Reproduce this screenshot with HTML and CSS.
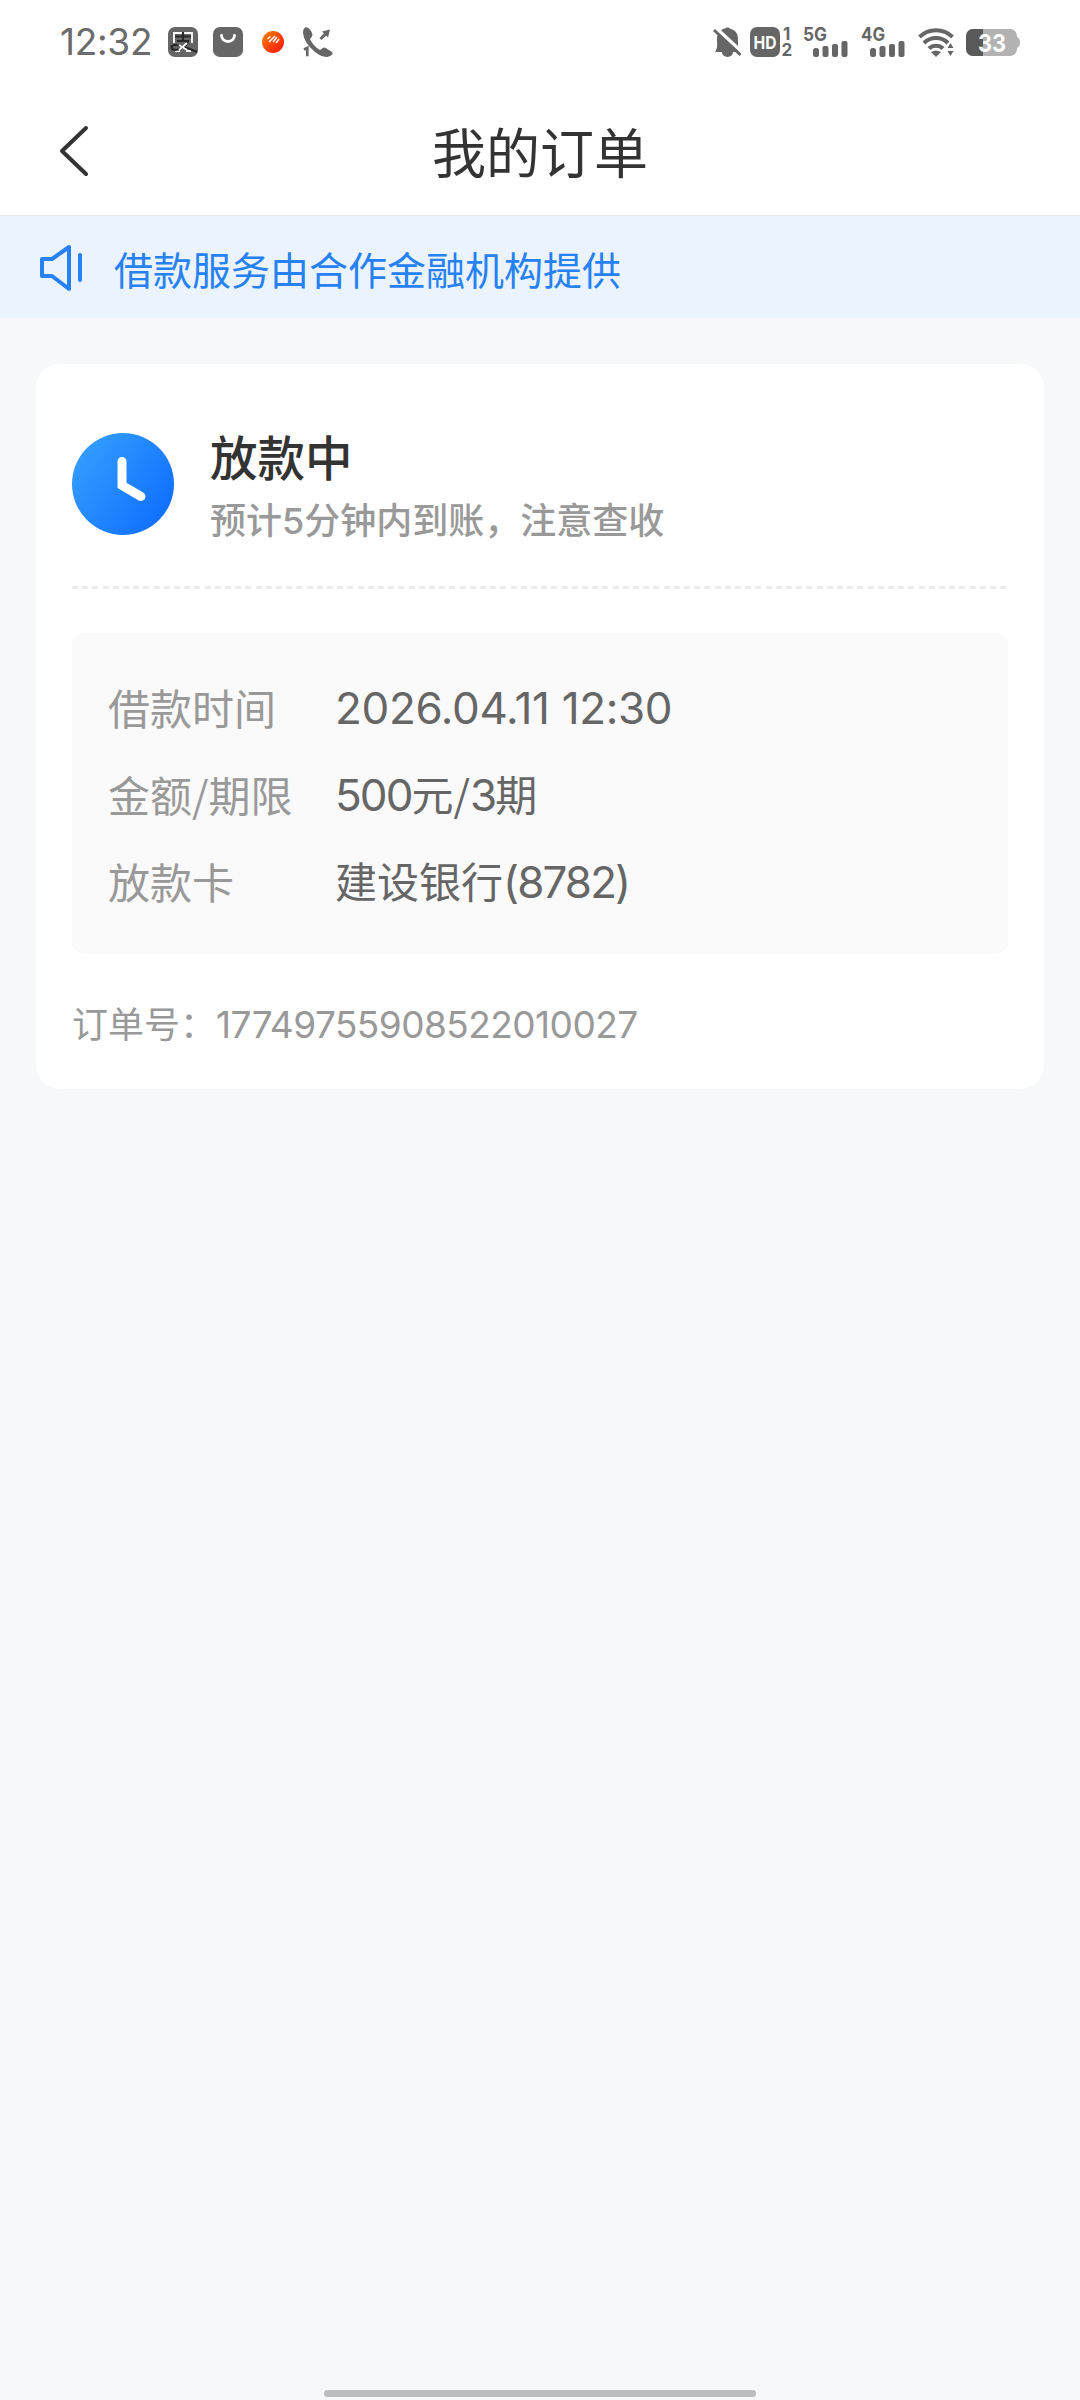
FILE: index.html
```html
<!DOCTYPE html>
<html lang="zh-CN">
<head>
<meta charset="utf-8">
<title>我的订单</title>
<link rel="stylesheet" href="styles.css">
</head>
<body>
<div class="screen">
  <div class="status-bar">
    <div class="status-left">
      <span class="clock-text">12:32</span>
      <svg width="30" height="30" viewBox="0 0 30 30"><rect width="30" height="30" rx="7" fill="#666"/><path d="M6 16V6h18v10M7 24h5M18 24h5" fill="none" stroke="#fff" stroke-width="1.800"/><path d="M7 9.500h16M15 5v9M9 14h12M20 15c-2 5-8 8-13 8-5-1-4-5 0-5 7 0 13 3 22 7" fill="none" stroke="#282828" stroke-width="2.200"/><path d="M11 18l8 5M19 16l-8 7" stroke="#fff" stroke-width="1.800"/></svg>
      <svg width="30" height="30" viewBox="0 0 30 30"><rect width="30" height="30" rx="7" fill="#666"/><path d="M8.500 8.500a6.500 6 0 0 0 13 0" fill="none" stroke="#fff" stroke-width="2.800" stroke-linecap="round"/></svg>
      <svg width="30" height="30" viewBox="0 0 30 30"><defs><linearGradient id="sun" x1="0" y1="0" x2="1" y2="1"><stop offset="0" stop-color="#ff8a00"/><stop offset=".6" stop-color="#fb3b07"/><stop offset="1" stop-color="#ef1609"/></linearGradient></defs><circle cx="15" cy="15" r="11" fill="url(#sun)"/><path d="M9.500 12l3-2.500M11 15l6-6M15 15l4-5M18 16l3-4" stroke="#fff" stroke-width="1.500"/></svg>
      <svg width="30" height="30" viewBox="0 0 30 30"><path d="M2 .500C5-1 9 4 9.500 8Q9 10 7 12 10 19 17 23 20 20 22 20.500L29 25Q31 27 27 29 21 32 12 25 1 16 0 6 0 2 2 .500z" fill="#666"/><path d="M17.500 12l6-6" stroke="#666" stroke-width="3"/><path d="M19 4.500l8-2-2 8z" fill="#666"/><path d="M1 22.500l3.300-1.700v8.500" fill="none" stroke="#666" stroke-width="2.600"/></svg>
    </div>
    <div class="status-right">
      <svg width="25" height="30" viewBox="0 0 25 30"><path d="M1 25c3-4 2-8 2-13C3 5 8 2 11 1.500 12 0 15 0 16 1.500 21 3 24 6 24 12s0 10 2 13z" fill="#666"/><path d="M8 25a5.500 5 0 0 0 11 0" fill="#666"/><path d="M1 0l27 25" stroke="#fff" stroke-width="3.500"/><path d="M0 3l26.500 25" stroke="#666" stroke-width="2.800"/></svg>
      <svg width="42" height="30" viewBox="0 0 42 30"><rect width="30" height="30" rx="7" fill="#666"/><text x="15" y="21.500" textLength="23" lengthAdjust="spacingAndGlyphs" text-anchor="middle" class="glyph-light" font-size="18">HD</text><text x="33" y="12.500" class="glyph" font-size="17">1</text><text x="31.500" y="29" class="glyph" font-size="17">2</text></svg>
      <svg width="47" height="30" viewBox="0 0 47 30"><text x="0" y="14" textLength="24" lengthAdjust="spacingAndGlyphs" class="glyph" font-size="19">5G</text><g fill="#666"><rect x="10" y="21" width="6" height="9" rx="2.500"/><rect x="19.500" y="19" width="6" height="11" rx="2"/><rect x="29" y="17" width="6" height="13" rx="2"/><rect x="38.500" y="14" width="6" height="16" rx="2"/></g></svg>
      <svg width="46" height="30" viewBox="0 0 46 30"><text x="0" y="14" textLength="24" lengthAdjust="spacingAndGlyphs" class="glyph" font-size="19">4G</text><g fill="#666"><rect x="9" y="21" width="6" height="9" rx="2.500"/><rect x="18.500" y="19" width="6" height="11" rx="2"/><rect x="28" y="17" width="6" height="13" rx="2"/><rect x="37.500" y="14" width="6" height="16" rx="2"/></g></svg>
      <svg width="37" height="30" viewBox="0 0 37 30"><g fill="none" stroke="#666" stroke-width="4"><path d="M1.500 10a23.500 23.500 0 0 1 33 0"/><path d="M6 16a17 17 0 0 1 24 0"/><path d="M11 21.500a10 10 0 0 1 14 0"/></g><path d="M13 25q5-3 10 0l-5 5z" fill="#666"/><path d="M29.500 21l3-5 3 5zM29.500 24l3 5 3-5z" fill="#666"/></svg>
      <svg width="54" height="27" viewBox="0 0 54 27"><defs><clipPath id="cell"><rect width="51" height="27" rx="7"/></clipPath></defs><g clip-path="url(#cell)"><rect width="51" height="27" fill="#b2b2b2"/><rect width="17" height="27" fill="#595959"/></g><path d="M51 8c4 1 4 10 0 11z" fill="#b2b2b2"/><text x="26" y="22.500" text-anchor="middle" textLength="28" lengthAdjust="spacingAndGlyphs" class="glyph-light" font-size="24">33</text></svg>
    </div>
  </div>

  <header class="nav">
    <svg class="back" width="32" height="52" viewBox="0 0 32 52"><path d="M28 3L4 26l24 23" fill="none" stroke="#333" stroke-width="4" stroke-linecap="round" stroke-linejoin="round"/></svg>
    <h1 class="nav-title">我的订单</h1>
  </header>

  <div class="notice">
    <svg width="44" height="46" viewBox="0 0 44 46"><g fill="none" stroke="#2681f2" stroke-width="4" stroke-linejoin="round" stroke-linecap="round"><path d="M2 14h10L29 2v42L12 31H2z"/><path d="M40 10v25"/></g></svg>
    <span>借款服务由合作金融机构提供</span>
  </div>

  <main class="card">
    <section class="state">
      <svg width="102" height="102" viewBox="0 0 102 102"><defs><linearGradient id="disc" x1="0" y1=".15" x2="1" y2=".85"><stop offset="0" stop-color="#35a0ff"/><stop offset="1" stop-color="#0d6cff"/></linearGradient></defs><circle cx="51" cy="51" r="51" fill="url(#disc)"/><path d="M50 28.500V52.500L69 63.500" fill="none" stroke="#fff" stroke-width="9" stroke-linecap="round"/></svg>
      <div class="state-text">
        <h2>放款中</h2>
        <p>预计<span class="n">5</span>分钟内到账，注意查收</p>
      </div>
    </section>
    <div class="divider"></div>
    <dl class="details">
      <dt>借款时间</dt><dd><span class="num date">2026.04.11 12:30</span></dd>
      <dt>金额/期限</dt><dd><span class="num">500</span>元/<span class="num">3</span>期</dd>
      <dt>放款卡</dt><dd>建设银行<span class="num">(8782)</span></dd>
    </dl>
    <p class="order">订单号：<span class="order-num">17749755908522010027</span></p>
  </main>
  <div class="home-bar"></div>
</div>
</body>
</html>
```
FILE: styles.css
```css
* { box-sizing: border-box; margin: 0; padding: 0; }

body {
  width: 1080px;
  height: 2400px;
  background: #f6f8fa;
  font-family: "Noto Sans CJK SC", sans-serif;
  color: #333;
}

svg { display: block; flex: none; overflow: visible; }

.screen {
  display: flex;
  flex-direction: column;
  width: 1080px;
  height: 2400px;
}

.status-bar {
  display: flex;
  justify-content: space-between;
  align-items: center;
  height: 84px;
  padding: 0 60px;
  background: #fff;
}

.status-left, .status-right { display: flex; align-items: center; }
.status-left { gap: 15px; }
.status-right { gap: 11px; }

.clock-text {
  width: 93px;
  font: 400 37px/40px Inter, sans-serif;
  letter-spacing: -0.3px;
  color: #6b6b6b;
  white-space: nowrap;
}

.glyph, .glyph-light { font-family: Inter, sans-serif; font-weight: 700; fill: #666; }
.glyph-light { fill: #fff; }

.nav {
  display: grid;
  grid-template-columns: 200px 1fr 200px;
  align-items: center;
  height: 132px;
  padding-top: 2px;
  background: #fff;
  border-bottom: 1px solid #e3e7ec;
}

.back { margin: 0 0 0 58px; }

.nav-title {
  font-size: 54px;
  line-height: 60px;
  font-weight: 400;
  text-align: center;
}

.notice {
  display: flex;
  align-items: center;
  gap: 30px;
  height: 102px;
  padding: 2px 0 0 40px;
  background: #eaf3fe;
  color: #2681f2;
  font-size: 39px;
  line-height: 60px;
}

.card {
  display: flex;
  flex-direction: column;
  height: 725px;
  margin: 46px 36px 0;
  padding: 69px 36px 0;
  border-radius: 24px;
  background: #fff;
}

.state { display: flex; gap: 36px; height: 153px; }
.state-text { display: flex; flex-direction: column; }
.state h2 { font-size: 47.500px; font-weight: 500; line-height: 60px; margin-top: -7px; }
.state p { font-size: 36px; font-weight: 500; line-height: 50px; margin-top: 7px; color: #999; }
.n { font-family: Inter, sans-serif; font-size: 36px; }

.divider {
  height: 3px;
  background: repeating-linear-gradient(90deg, #ececec 0 6px, transparent 6px 10.200px);
}

.details {
  display: grid;
  grid-template-columns: 227px 1fr;
  grid-auto-rows: 87px;
  align-items: center;
  height: 321px;
  margin-top: 44px;
  padding: 30px 36px 30px;
  border-radius: 12px;
  background: #fafafa;
  font-size: 42px;
  line-height: 60px;
  white-space: nowrap;
}

.details dt { color: #999; }
.details dd { color: #666; }

.num { font-family: Inter, sans-serif; font-size: 44px; letter-spacing: -1.900px; }
.date { letter-spacing: -0.350px; }

.order {
  margin-top: 43px;
  font-size: 36px;
  line-height: 50px;
  color: #999;
}

.order-num { font-family: Inter, sans-serif; font-size: 37px; letter-spacing: -0.550px; }

.home-bar {
  width: 432px;
  height: 7px;
  margin: auto auto 3px;
  border-radius: 4px;
  background: #babcbe;
}
```
